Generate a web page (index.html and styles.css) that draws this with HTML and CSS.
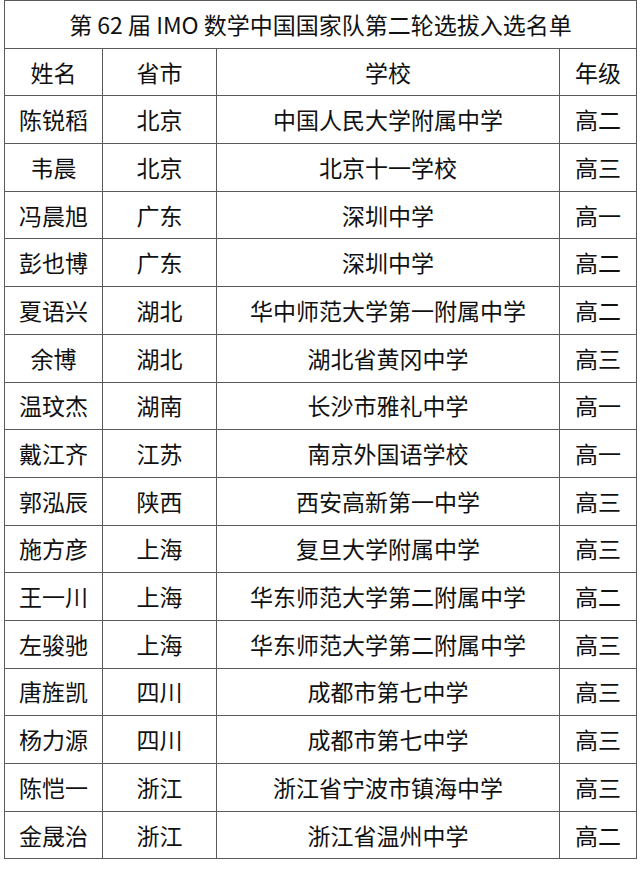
FILE: index.html
```html
<!DOCTYPE html>
<html lang="zh-CN">
<head>
<meta charset="utf-8">
<link rel="stylesheet" href="styles.css">
</head>
<body>
<table class="list">
  <colgroup>
    <col class="c-name"><col class="c-prov"><col class="c-school"><col class="c-grade">
  </colgroup>
  <tr><td class="title" colspan="4">第 62 届 IMO 数学中国国家队第二轮选拔入选名单</td></tr>
  <tr><td>姓名</td><td>省市</td><td>学校</td><td>年级</td></tr>
  <tr><td>陈锐稻</td><td>北京</td><td>中国人民大学附属中学</td><td>高二</td></tr>
  <tr><td>韦晨</td><td>北京</td><td>北京十一学校</td><td>高三</td></tr>
  <tr><td>冯晨旭</td><td>广东</td><td>深圳中学</td><td>高一</td></tr>
  <tr><td>彭也博</td><td>广东</td><td>深圳中学</td><td>高二</td></tr>
  <tr><td>夏语兴</td><td>湖北</td><td>华中师范大学第一附属中学</td><td>高二</td></tr>
  <tr><td>余博</td><td>湖北</td><td>湖北省黄冈中学</td><td>高三</td></tr>
  <tr><td>温玟杰</td><td>湖南</td><td>长沙市雅礼中学</td><td>高一</td></tr>
  <tr><td>戴江齐</td><td>江苏</td><td>南京外国语学校</td><td>高一</td></tr>
  <tr><td>郭泓辰</td><td>陕西</td><td>西安高新第一中学</td><td>高三</td></tr>
  <tr><td>施方彦</td><td>上海</td><td>复旦大学附属中学</td><td>高三</td></tr>
  <tr><td>王一川</td><td>上海</td><td>华东师范大学第二附属中学</td><td>高二</td></tr>
  <tr><td>左骏驰</td><td>上海</td><td>华东师范大学第二附属中学</td><td>高三</td></tr>
  <tr><td>唐旌凯</td><td>四川</td><td>成都市第七中学</td><td>高三</td></tr>
  <tr><td>杨力源</td><td>四川</td><td>成都市第七中学</td><td>高三</td></tr>
  <tr><td>陈恺一</td><td>浙江</td><td>浙江省宁波市镇海中学</td><td>高三</td></tr>
  <tr><td>金晟治</td><td>浙江</td><td>浙江省温州中学</td><td>高二</td></tr>
</table>
</body>
</html>
```
FILE: styles.css
```css
html, body {
  margin: 0;
  padding: 0;
  background: #ffffff;
}
body {
  font-family: "Noto Sans CJK SC", "Noto Sans", sans-serif;
  color: #111111;
}
.list {
  margin-left: 4px;
  border-collapse: collapse;
  table-layout: fixed;
  width: 632px;
}
.c-name { width: 98px; }
.c-prov { width: 114px; }
.c-school { width: 343px; }
.c-grade { width: 77px; }
.list td {
  border: 1px solid #5a5a5a;
  height: 46.7px;
  padding: 0;
  text-align: center;
  vertical-align: middle;
  font-size: 23px;
  line-height: 1;
}
.list td.title {
  font-size: 23px;
}
```
